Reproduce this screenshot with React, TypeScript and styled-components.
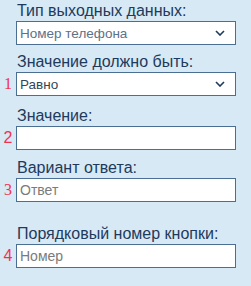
import styled, { createGlobalStyle } from 'styled-components';

const Global = createGlobalStyle`
  html, body {
    margin: 0;
    padding: 0;
    background: #d6e9f5;
  }
  body {
    font-family: 'Liberation Sans', Arial, sans-serif;
  }
`;

// ===== styled =====
const Panel = styled.div`
  width: 251px;
  height: 286px;
  background: #d6e9f5;
  padding: 2px 0 0 0;
  box-sizing: border-box;
  display: flex;
  flex-direction: column;
`;

const Field = styled.div<{ $top: number }>`
  margin-top: ${({ $top }) => $top}px;
  display: flex;
  flex-direction: column;
`;

const Label = styled.div`
  margin-left: 17px;
  font-size: 16px;
  line-height: 18px;
  color: #1e3a5c;
  margin-bottom: 1px;
`;

const Row = styled.div`
  display: flex;
  align-items: center;
`;

const Num = styled.span<{ $serif?: boolean }>`
  width: 16px;
  text-align: center;
  font-family: ${({ $serif }) => ($serif ? "'Liberation Serif', 'Times New Roman', serif" : "'Liberation Sans', Arial, sans-serif")};
  font-size: 16px;
  color: #ee3350;
`;

const Box = styled.div`
  width: 220px;
  height: 24px;
  box-sizing: border-box;
  border: 1px solid #4b6f93;
  background: #fff;
  display: flex;
  align-items: center;
  padding: 0 10px 0 3px;
`;

const Value = styled.span<{ $tone: 'muted' | 'dark' | 'hint' }>`
  flex: 1;
  font-size: ${({ $tone }) => ($tone === 'hint' ? '14px' : '13.5px')};
  color: ${({ $tone }) => ($tone === 'muted' ? '#5d7189' : $tone === 'dark' ? '#33475c' : '#7b7b7b')};
`;

const Chevron = () => (
  <svg width="10" height="6" viewBox="0 0 10 6">
    <polyline points="1,1 5,5 9,1" fill="none" stroke="#1e3a5c" strokeWidth="1.6" />
  </svg>
);

// ===== page =====
export default function App() {
  return (
    <>
      <Global />
      <Panel>
        <Field $top={0}>
          <Label>Тип выходных данных:</Label>
          <Row>
            <Num />
            <Box>
              <Value $tone="muted">Номер телефона</Value>
              <Chevron />
            </Box>
          </Row>
        </Field>

        <Field $top={8}>
          <Label>Значение должно быть:</Label>
          <Row>
            <Num $serif>1</Num>
            <Box>
              <Value $tone="dark">Равно</Value>
              <Chevron />
            </Box>
          </Row>
        </Field>

        <Field $top={11}>
          <Label>Значение:</Label>
          <Row>
            <Num>2</Num>
            <Box />
          </Row>
        </Field>

        <Field $top={9}>
          <Label>Вариант ответа:</Label>
          <Row>
            <Num $serif>3</Num>
            <Box>
              <Value $tone="hint">Ответ</Value>
            </Box>
          </Row>
        </Field>

        <Field $top={23}>
          <Label>Порядковый номер кнопки:</Label>
          <Row>
            <Num>4</Num>
            <Box>
              <Value $tone="hint">Номер</Value>
            </Box>
          </Row>
        </Field>
      </Panel>
    </>
  );
}
